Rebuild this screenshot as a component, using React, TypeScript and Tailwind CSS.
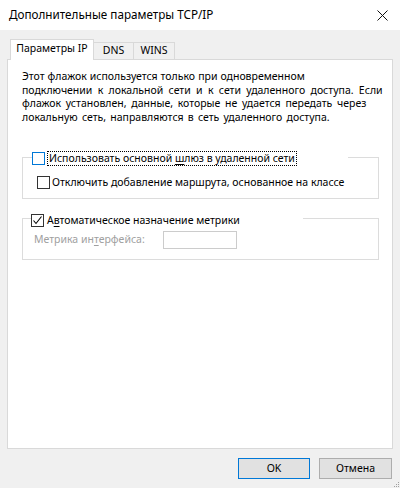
import React from "react";

function Check({ checked = false, blue = false }: { checked?: boolean; blue?: boolean }) {
  return (
    <div
      className={
        "w-[13px] h-[13px] shrink-0 bg-white border flex items-center justify-center " +
        (blue ? "border-[#0078d7]" : "border-[#333333]")
      }
    >
      {checked && (
        <svg width="11" height="11" viewBox="0 0 11 11">
          <polyline points="1.5,5.5 4,8.5 9.5,1.5" fill="none" stroke="#000" strokeWidth="1.1" />
        </svg>
      )}
    </div>
  );
}

export default function App() {
  return (
    <div className="w-[400px] h-[488px] bg-[#f0f0f0] flex flex-col font-['Noto_Sans',sans-serif] text-black text-[10.5px] relative overflow-hidden">
      {/* Title bar */}
      <div className="h-[30px] bg-white flex items-center justify-between pl-[9px] pr-[12px] shrink-0">
        <span className="text-[11.7px]">Дополнительные параметры TCP/IP</span>
        <svg width="11" height="11" viewBox="0 0 11 11">
          <line x1="0.5" y1="0.5" x2="10.5" y2="10.5" stroke="#111" strokeWidth="1" />
          <line x1="10.5" y1="0.5" x2="0.5" y2="10.5" stroke="#111" strokeWidth="1" />
        </svg>
      </div>

      {/* Body */}
      <div className="flex-1 flex flex-col px-[7px] pt-[9px]">
        {/* Tabs */}
        <div className="flex items-end h-[21px] pl-[3px] relative z-10 -mb-px">
          <div className="h-[21px] w-[84px] bg-white border border-b-0 border-[#d9d9d9] flex items-center justify-center pb-[2px]">
            Параметры IP
          </div>
          <div className="h-[17px] w-[40px] mb-px bg-[#f0f0f0] border border-l-0 border-b-0 border-[#d9d9d9] flex items-center justify-center">
            DNS
          </div>
          <div className="h-[17px] w-[41px] mb-px bg-[#f0f0f0] border border-l-0 border-b-0 border-[#d9d9d9] flex items-center justify-center">
            WINS
          </div>
        </div>

        {/* Panel */}
        <div className="h-[390px] bg-white border border-[#d9d9d9] pl-[14px] pt-[10px] flex flex-col">
          <div className="leading-[13.5px] [word-spacing:1.5px]">
            <div className="[word-spacing:0.3px]">Этот флажок используется только при одновременном</div>
            <div className="[word-spacing:2.6px]">подключении к локальной сети и к сети удаленного доступа. Если</div>
            <div className="[word-spacing:2px]">флажок установлен, данные, которые не удается передать через</div>
            <div>локальную сеть, направляются в сеть удаленного доступа.</div>
          </div>

          {/* Group 1 */}
          <div className="w-[357px] mt-[26px] flex flex-col">
            <div className="flex h-[16px]">
              <div className="w-[10px] h-[9px] self-end border-l border-t border-[#dcdcdc]" />
              <div className="w-[316px] flex items-center">
                <Check blue />
                <div className="ml-[2px] px-[1px] border border-dotted border-black leading-[13px]">
                  Использовать основной <span className="underline underline-offset-2">ш</span>люз в удаленной сети
                </div>
              </div>
              <div className="flex-1 h-[9px] self-end border-r border-t border-[#dcdcdc]" />
            </div>
            <div className="border-l border-r border-b border-[#dcdcdc] pt-[10px] pl-[14px] pb-[9px] flex items-center">
              <Check />
              <span className="ml-[2px] leading-[13px]">Отключить добавление маршрута, основанное на классе</span>
            </div>
          </div>

          {/* Group 2 */}
          <div className="w-[357px] mt-[13px] flex flex-col">
            <div className="flex h-[16px]">
              <div className="w-[9px] h-[10px] self-end border-l border-t border-[#dcdcdc]" />
              <div className="w-[272px] flex items-center">
                <Check checked />
                <span className="ml-[3px] leading-[13px]">
                  А<span className="underline underline-offset-2">в</span>томатическое назначение метрики
                </span>
              </div>
              <div className="flex-1 h-[10px] self-end border-r border-t border-[#dcdcdc]" />
            </div>
            <div className="border-l border-r border-b border-[#dcdcdc] pt-[3px] pl-[11px] pb-[10px] flex items-center">
              <span className="w-[129px] text-[#a0a0a0]">
                Метрика ин<span className="underline underline-offset-2">т</span>ерфейса:
              </span>
              <div className="w-[74px] h-[18px] bg-white border border-[#cccccc]" />
            </div>
          </div>
        </div>

        {/* Buttons */}
        <div className="mt-[9px] flex justify-end gap-[9px] pr-px">
          <div className="w-[72px] h-[21px] bg-[#e1e1e1] border border-[#0078d7] flex items-center justify-center">
            OK
          </div>
          <div className="w-[73px] h-[21px] bg-[#e1e1e1] border border-[#adadad] flex items-center justify-center">
            Отмена
          </div>
        </div>
      </div>

      {/* Size grip */}
      <svg className="absolute right-0 bottom-0" width="6" height="6" viewBox="0 0 6 6">
        <rect x="4" y="0" width="1" height="1" fill="#a0a0a0" />
        <rect x="2" y="2" width="1" height="1" fill="#a0a0a0" />
        <rect x="4" y="2" width="1" height="1" fill="#a0a0a0" />
        <rect x="0" y="4" width="1" height="1" fill="#a0a0a0" />
        <rect x="2" y="4" width="1" height="1" fill="#a0a0a0" />
        <rect x="4" y="4" width="1" height="1" fill="#a0a0a0" />
      </svg>
    </div>
  );
}
